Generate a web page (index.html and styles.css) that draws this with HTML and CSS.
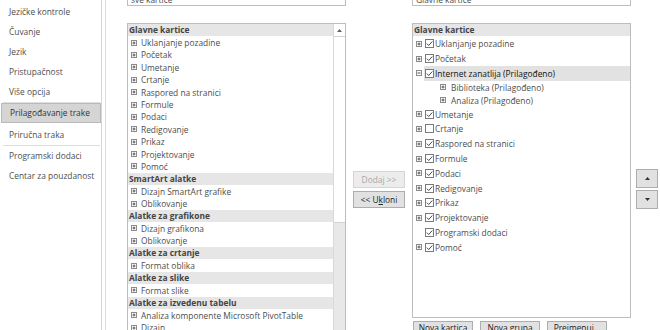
FILE: index.html
```html
<!DOCTYPE html>
<html>
<head>
    <meta charset="utf-8">
    <title>Prilagođavanje trake</title>
    <link rel="stylesheet" href="styles.css">
</head>
<body>
    <svg class="defs" width="0" height="0">
        <symbol id="plus" viewBox="0 0 6 6">
            <rect x="0.5" y="0.5" width="5" height="5" fill="#fff" stroke="#8c8c8c"/>
            <path d="M1.5 3h3M3 1.5v3" stroke="#505050"/>
        </symbol>
        <symbol id="minus" viewBox="0 0 6 6">
            <rect x="0.5" y="0.5" width="5" height="5" fill="#fff" stroke="#8c8c8c"/>
            <path d="M1.5 3h3" stroke="#505050"/>
        </symbol>
        <symbol id="chk" viewBox="0 0 9 9">
            <rect x="0.5" y="0.5" width="8" height="8" fill="#fff" stroke="#7a7a7a"/>
            <path d="M1.8 4.6l1.9 1.9l3.6-4" fill="none" stroke="#333" stroke-width="0.9"/>
        </symbol>
        <symbol id="box" viewBox="0 0 9 9">
            <rect x="0.5" y="0.5" width="8" height="8" fill="#fff" stroke="#7a7a7a"/>
        </symbol>
    </svg>

    <div class="dialog">
        <div class="nav">
            <div class="nav-item">Jezičke kontrole</div>
            <div class="nav-item">Čuvanje</div>
            <div class="nav-item">Jezik</div>
            <div class="nav-item">Pristupačnost</div>
            <div class="nav-item">Više opcija</div>
            <div class="nav-sep"></div>
            <div class="nav-item active">Prilagođavanje trake</div>
            <div class="nav-item">Priručna traka</div>
            <div class="nav-sep"></div>
            <div class="nav-item">Programski dodaci</div>
            <div class="nav-item">Centar za pouzdanost</div>
        </div>

        <div class="content">
            <!-- lijeva lista: komande -->
            <div class="col">
                <div class="combo">sve kartice</div>
                <div class="listbox tall">
                    <div class="items">
                        <div class="hdr">Glavne kartice</div>
                        <div class="row"><svg class="exp"><use href="#plus"/></svg>Uklanjanje pozadine</div>
                        <div class="row"><svg class="exp"><use href="#plus"/></svg>Početak</div>
                        <div class="row"><svg class="exp"><use href="#plus"/></svg>Umetanje</div>
                        <div class="row"><svg class="exp"><use href="#plus"/></svg>Crtanje</div>
                        <div class="row"><svg class="exp"><use href="#plus"/></svg>Raspored na stranici</div>
                        <div class="row"><svg class="exp"><use href="#plus"/></svg>Formule</div>
                        <div class="row"><svg class="exp"><use href="#plus"/></svg>Podaci</div>
                        <div class="row"><svg class="exp"><use href="#plus"/></svg>Redigovanje</div>
                        <div class="row"><svg class="exp"><use href="#plus"/></svg>Prikaz</div>
                        <div class="row"><svg class="exp"><use href="#plus"/></svg>Projektovanje</div>
                        <div class="row"><svg class="exp"><use href="#plus"/></svg>Pomoć</div>
                        <div class="hdr">SmartArt alatke</div>
                        <div class="row"><svg class="exp"><use href="#plus"/></svg>Dizajn SmartArt grafike</div>
                        <div class="row"><svg class="exp"><use href="#plus"/></svg>Oblikovanje</div>
                        <div class="hdr">Alatke za grafikone</div>
                        <div class="row"><svg class="exp"><use href="#plus"/></svg>Dizajn grafikona</div>
                        <div class="row"><svg class="exp"><use href="#plus"/></svg>Oblikovanje</div>
                        <div class="hdr">Alatke za crtanje</div>
                        <div class="row"><svg class="exp"><use href="#plus"/></svg>Format oblika</div>
                        <div class="hdr">Alatke za slike</div>
                        <div class="row"><svg class="exp"><use href="#plus"/></svg>Format slike</div>
                        <div class="hdr">Alatke za izvedenu tabelu</div>
                        <div class="row"><svg class="exp"><use href="#plus"/></svg>Analiza komponente Microsoft PivotTable</div>
                        <div class="row"><svg class="exp"><use href="#plus"/></svg>Dizajn</div>
                    </div>
                    <div class="vscroll">
                        <div class="vs-btn">
                            <svg width="5" height="3" viewBox="0 0 5 3"><path d="M0 3L2.5 0L5 3z" fill="#606060"/></svg>
                        </div>
                        <div class="vs-thumb"></div>
                    </div>
                </div>
            </div>

            <div class="mid">
                <button class="btn small disabled">Doda<u>j</u> &gt;&gt;</button>
                <button class="btn small">&lt;&lt; U<u>k</u>loni</button>
            </div>

            <!-- desna lista: prilagođena traka -->
            <div class="col">
                <div class="combo">Glavne kartice</div>
                <div class="listbox short">
                    <div class="items">
                        <div class="hdr">Glavne kartice</div>
                        <div class="rrow"><svg class="rexp"><use href="#plus"/></svg><svg class="cb"><use href="#chk"/></svg>Uklanjanje pozadine</div>
                        <div class="rrow"><svg class="rexp"><use href="#plus"/></svg><svg class="cb"><use href="#chk"/></svg>Početak</div>
                        <div class="rrow"><svg class="rexp"><use href="#minus"/></svg><span class="sel"><svg class="cb"><use href="#chk"/></svg>Internet zanatlija (Prilagođeno)</span></div>
                        <div class="sub"><svg class="sexp"><use href="#plus"/></svg>Biblioteka (Prilagođeno)</div>
                        <div class="sub"><svg class="sexp"><use href="#plus"/></svg>Analiza (Prilagođeno)</div>
                        <div class="rrow"><svg class="rexp"><use href="#plus"/></svg><svg class="cb"><use href="#chk"/></svg>Umetanje</div>
                        <div class="rrow"><svg class="rexp"><use href="#plus"/></svg><svg class="cb"><use href="#box"/></svg>Crtanje</div>
                        <div class="rrow"><svg class="rexp"><use href="#plus"/></svg><svg class="cb"><use href="#chk"/></svg>Raspored na stranici</div>
                        <div class="rrow"><svg class="rexp"><use href="#plus"/></svg><svg class="cb"><use href="#chk"/></svg>Formule</div>
                        <div class="rrow"><svg class="rexp"><use href="#plus"/></svg><svg class="cb"><use href="#chk"/></svg>Podaci</div>
                        <div class="rrow"><svg class="rexp"><use href="#plus"/></svg><svg class="cb"><use href="#chk"/></svg>Redigovanje</div>
                        <div class="rrow"><svg class="rexp"><use href="#plus"/></svg><svg class="cb"><use href="#chk"/></svg>Prikaz</div>
                        <div class="rrow"><svg class="rexp"><use href="#plus"/></svg><svg class="cb"><use href="#chk"/></svg>Projektovanje</div>
                        <div class="rrow"><span class="rexp"></span><svg class="cb"><use href="#chk"/></svg>Programski dodaci</div>
                        <div class="rrow"><svg class="rexp"><use href="#plus"/></svg><svg class="cb"><use href="#chk"/></svg>Pomoć</div>
                    </div>
                </div>
                <div class="bottom-btns">
                    <button class="btn wide">Nova kartica</button>
                    <button class="btn wide">Nova grupa</button>
                    <button class="btn wide">Preimenuj...</button>
                </div>
            </div>

            <div class="updown">
                <button class="btn arrow"><svg width="5" height="3" viewBox="0 0 5 3"><path d="M0 3L2.5 0L5 3z" fill="#333"/></svg></button>
                <button class="btn arrow"><svg width="5" height="3" viewBox="0 0 5 3"><path d="M0 0L2.5 3L5 0z" fill="#333"/></svg></button>
            </div>
        </div>
    </div>
</body>
</html>
```

FILE: styles.css
```css
* {
    box-sizing: border-box;
}

body {
    margin: 0;
    width: 660px;
    height: 330px;
    overflow: hidden;
    background-color: white;
    color: #4d4d4d;
    font-family: "Open Sans", sans-serif;
    font-size: 8.4px;
}

.defs {
    position: absolute;
}

.dialog {
    display: flex;
    height: 330px;
    overflow: hidden;
}

/* lijevi meni */
.nav {
    width: 102px;
    flex: none;
    border-right: 1px solid #d6d6d6;
    padding-top: 2px;
}

.nav-item {
    height: 20px;
    line-height: 20px;
    padding-left: 9px;
    white-space: nowrap;
}

.nav-item.active {
    margin: 0 0 2px 1px;
    padding-left: 8px;
    line-height: 18px;
    background-color: #d5d5d5;
    border: 1px solid #bababa;
    color: #333;
}

.nav-sep {
    height: 1px;
    margin: 0 1px 0 3px;
    background-color: #dedede;
}

/* glavni dio */
.content {
    flex: 1;
    display: flex;
    margin-left: 3px;
    border-left: 1px solid #dcdcdc;
    padding-left: 21px;
    overflow: hidden;
}

.col {
    width: 219px;
    flex: none;
    display: flex;
    flex-direction: column;
}

.combo {
    height: 20px;
    flex: none;
    margin-top: -14px;
    padding: 7px 0 0 3px;
    line-height: 11px;
    border: 1px solid #bdbdbd;
    white-space: nowrap;
}

.listbox {
    flex: none;
    margin-top: 17px;
    border: 1px solid #bdbdbd;
    display: flex;
    overflow: hidden;
}

.listbox.tall {
    height: 330px;
}

.listbox.short {
    height: 295px;
}

.items {
    flex: 1;
    min-width: 0;
}

.hdr {
    height: 12.4px;
    line-height: 12.4px;
    padding-left: 1px;
    background-color: #e6e6e6;
    font-weight: bold;
    color: #444;
    white-space: nowrap;
}

.row {
    height: 12.4px;
    display: flex;
    align-items: center;
    white-space: nowrap;
}

.exp {
    width: 6px;
    height: 6px;
    flex: none;
    margin: 0 4px 0 3px;
}

.vscroll {
    width: 12px;
    flex: none;
    border-left: 1px solid #d9d9d9;
    background-color: #e8e8e8;
    display: flex;
    flex-direction: column;
}

.vs-btn {
    height: 12px;
    background-color: white;
    display: flex;
    align-items: center;
    justify-content: center;
}

.vs-thumb {
    height: 187px;
    background-color: white;
    border-top: 1px solid #d2d2d2;
    border-bottom: 1px solid #d2d2d2;
}

/* desna lista */
.rrow {
    height: 14.8px;
    display: flex;
    align-items: center;
    white-space: nowrap;
}

.rexp {
    width: 6px;
    height: 6px;
    flex: none;
    margin: 0 2px 0 3px;
}

.cb {
    width: 9px;
    height: 9px;
    flex: none;
    margin: 0 1px 0 1px;
}

.sel {
    flex: 1;
    height: 14.8px;
    display: flex;
    align-items: center;
    background-color: #e2e2e2;
    color: #111;
}

.sub {
    height: 13px;
    display: flex;
    align-items: center;
    white-space: nowrap;
}

.sexp {
    width: 6px;
    height: 6px;
    flex: none;
    margin: 0 5px 0 27px;
}

/* dugmad */
.btn {
    font-family: "Open Sans", sans-serif;
    font-size: 8.4px;
    color: #222;
    background-color: #e1e1e1;
    border: 1px solid #adadad;
    padding: 0;
    margin: 0;
}

.btn.disabled {
    color: #a8a8a8;
    background-color: #ececec;
    border-color: #d4d4d4;
}

.mid {
    width: 66px;
    flex: none;
    display: flex;
    flex-direction: column;
    align-items: center;
    gap: 3px;
    padding-top: 171px;
}

.btn.small {
    width: 52px;
    height: 17px;
}

.bottom-btns {
    display: flex;
    flex: none;
    gap: 7px;
    margin-top: 3px;
    padding-left: 1px;
}

.btn.wide {
    width: 60px;
    height: 13px;
    flex: none;
}

.updown {
    display: flex;
    flex-direction: column;
    gap: 2px;
    margin-left: 5px;
    padding-top: 169px;
}

.btn.arrow {
    width: 22px;
    height: 19px;
    display: flex;
    align-items: center;
    justify-content: center;
}
```
